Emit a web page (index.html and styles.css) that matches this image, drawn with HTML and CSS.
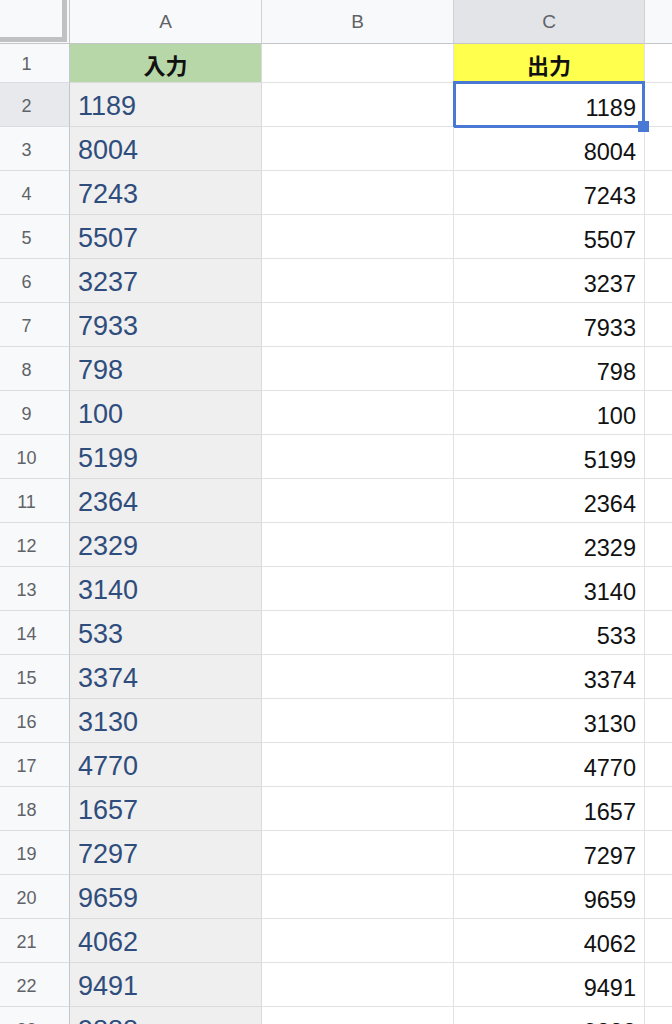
FILE: index.html
```html
<!DOCTYPE html>
<html lang="ja">
<head>
<meta charset="utf-8">
<link rel="stylesheet" href="styles.css">
</head>
<body>
<div class="sheet">
  <div class="corner"><div class="freeze"></div></div>
  <div class="colh">A</div>
  <div class="colh">B</div>
  <div class="colh sel">C</div>
  <div class="colh last"></div>

  <div class="rowh r1">1</div>
  <div class="cell a head green r1">入力</div>
  <div class="cell r1"></div>
  <div class="cell head yellow r1">出力</div>
  <div class="cell r1 last"></div>

  <div class="rowh sel">2</div><div class="cell a">1189</div><div class="cell"></div><div class="cell c active">1189<span class="handle"></span></div><div class="cell last"></div>
  <div class="rowh">3</div><div class="cell a">8004</div><div class="cell"></div><div class="cell c">8004</div><div class="cell last"></div>
  <div class="rowh">4</div><div class="cell a">7243</div><div class="cell"></div><div class="cell c">7243</div><div class="cell last"></div>
  <div class="rowh">5</div><div class="cell a">5507</div><div class="cell"></div><div class="cell c">5507</div><div class="cell last"></div>
  <div class="rowh">6</div><div class="cell a">3237</div><div class="cell"></div><div class="cell c">3237</div><div class="cell last"></div>
  <div class="rowh">7</div><div class="cell a">7933</div><div class="cell"></div><div class="cell c">7933</div><div class="cell last"></div>
  <div class="rowh">8</div><div class="cell a">798</div><div class="cell"></div><div class="cell c">798</div><div class="cell last"></div>
  <div class="rowh">9</div><div class="cell a">100</div><div class="cell"></div><div class="cell c">100</div><div class="cell last"></div>
  <div class="rowh">10</div><div class="cell a">5199</div><div class="cell"></div><div class="cell c">5199</div><div class="cell last"></div>
  <div class="rowh">11</div><div class="cell a">2364</div><div class="cell"></div><div class="cell c">2364</div><div class="cell last"></div>
  <div class="rowh">12</div><div class="cell a">2329</div><div class="cell"></div><div class="cell c">2329</div><div class="cell last"></div>
  <div class="rowh">13</div><div class="cell a">3140</div><div class="cell"></div><div class="cell c">3140</div><div class="cell last"></div>
  <div class="rowh">14</div><div class="cell a">533</div><div class="cell"></div><div class="cell c">533</div><div class="cell last"></div>
  <div class="rowh">15</div><div class="cell a">3374</div><div class="cell"></div><div class="cell c">3374</div><div class="cell last"></div>
  <div class="rowh">16</div><div class="cell a">3130</div><div class="cell"></div><div class="cell c">3130</div><div class="cell last"></div>
  <div class="rowh">17</div><div class="cell a">4770</div><div class="cell"></div><div class="cell c">4770</div><div class="cell last"></div>
  <div class="rowh">18</div><div class="cell a">1657</div><div class="cell"></div><div class="cell c">1657</div><div class="cell last"></div>
  <div class="rowh">19</div><div class="cell a">7297</div><div class="cell"></div><div class="cell c">7297</div><div class="cell last"></div>
  <div class="rowh">20</div><div class="cell a">9659</div><div class="cell"></div><div class="cell c">9659</div><div class="cell last"></div>
  <div class="rowh">21</div><div class="cell a">4062</div><div class="cell"></div><div class="cell c">4062</div><div class="cell last"></div>
  <div class="rowh">22</div><div class="cell a">9491</div><div class="cell"></div><div class="cell c">9491</div><div class="cell last"></div>
  <div class="rowh">23</div><div class="cell a">9888</div><div class="cell"></div><div class="cell c">9888</div><div class="cell last"></div>
</div>
</body>
</html>
```

FILE: styles.css
```css
html, body {
  margin: 0;
  padding: 0;
  background: #ffffff;
  overflow: hidden;
}

.sheet {
  display: grid;
  grid-template-columns: 70px 192px 192px 191px 1fr;
  grid-template-rows: 44px 39px repeat(22, 44px);
  width: 672px;
  height: 1024px;
  overflow: hidden;
  font-family: "Liberation Sans", Arial, "Noto Sans CJK JP", sans-serif;
}

.corner {
  background: #f8f9fa;
  border-right: 1px solid #c4c7c9;
  border-bottom: 1px solid #c4c7c9;
  box-sizing: border-box;
  position: relative;
}

.freeze {
  width: 67px;
  height: 42px;
  box-sizing: border-box;
  border-right: 5px solid #bfc1c3;
  border-bottom: 5px solid #bfc1c3;
}

.colh {
  background: #f8f9fa;
  color: #5f6368;
  font-size: 19px;
  display: flex;
  align-items: center;
  justify-content: center;
  padding-top: 1px;
  box-sizing: border-box;
  border-right: 1px solid #d0d2d4;
  border-bottom: 1px solid #c4c7c9;
}

.colh.sel {
  background: #e2e4e8;
}

.colh.last {
  border-right: none;
}

.rowh {
  background: #f8f9fa;
  color: #5f6368;
  font-size: 18px;
  display: flex;
  align-items: center;
  justify-content: center;
  padding-right: 16px;
  padding-top: 3px;
  box-sizing: border-box;
  border-right: 1px solid #c4c7c9;
  border-bottom: 1px solid #dcdde0;
}

.rowh.sel {
  background: #e7e9ed;
}

.cell {
  box-sizing: border-box;
  border-right: 1px solid #e2e2e2;
  border-bottom: 1px solid #e2e2e2;
  display: flex;
  align-items: flex-end;
  padding: 0 8px 4px 8px;
  white-space: nowrap;
  position: relative;
}

.cell.last {
  border-right: none;
}

.cell.a {
  background: #efefef;
  color: #2f4d7c;
  font-size: 27px;
  line-height: 31px;
  border-right-color: #dadada;
  border-bottom-color: #dcdcdc;
}

.cell.c {
  justify-content: flex-end;
  color: #111111;
  font-size: 23.5px;
  line-height: 27px;
  padding-right: 8px;
  padding-bottom: 4px;
}

.cell.head {
  justify-content: center;
  align-items: center;
  padding: 2px 0 0 0;
  font-family: "Noto Sans CJK JP", sans-serif;
  font-weight: 700;
  font-size: 22px;
  color: #111111;
}

.cell.green {
  background: #b7d7a8;
}

.cell.yellow {
  background: #ffff4d;
}

.cell.active::after {
  content: "";
  position: absolute;
  left: -1px;
  top: -2px;
  right: -1px;
  bottom: -2px;
  border: 3px solid #4a78d5;
  pointer-events: none;
}

.handle {
  position: absolute;
  right: -5px;
  bottom: -6px;
  width: 11px;
  height: 11px;
  background: #4a78d5;
  z-index: 2;
}
```
